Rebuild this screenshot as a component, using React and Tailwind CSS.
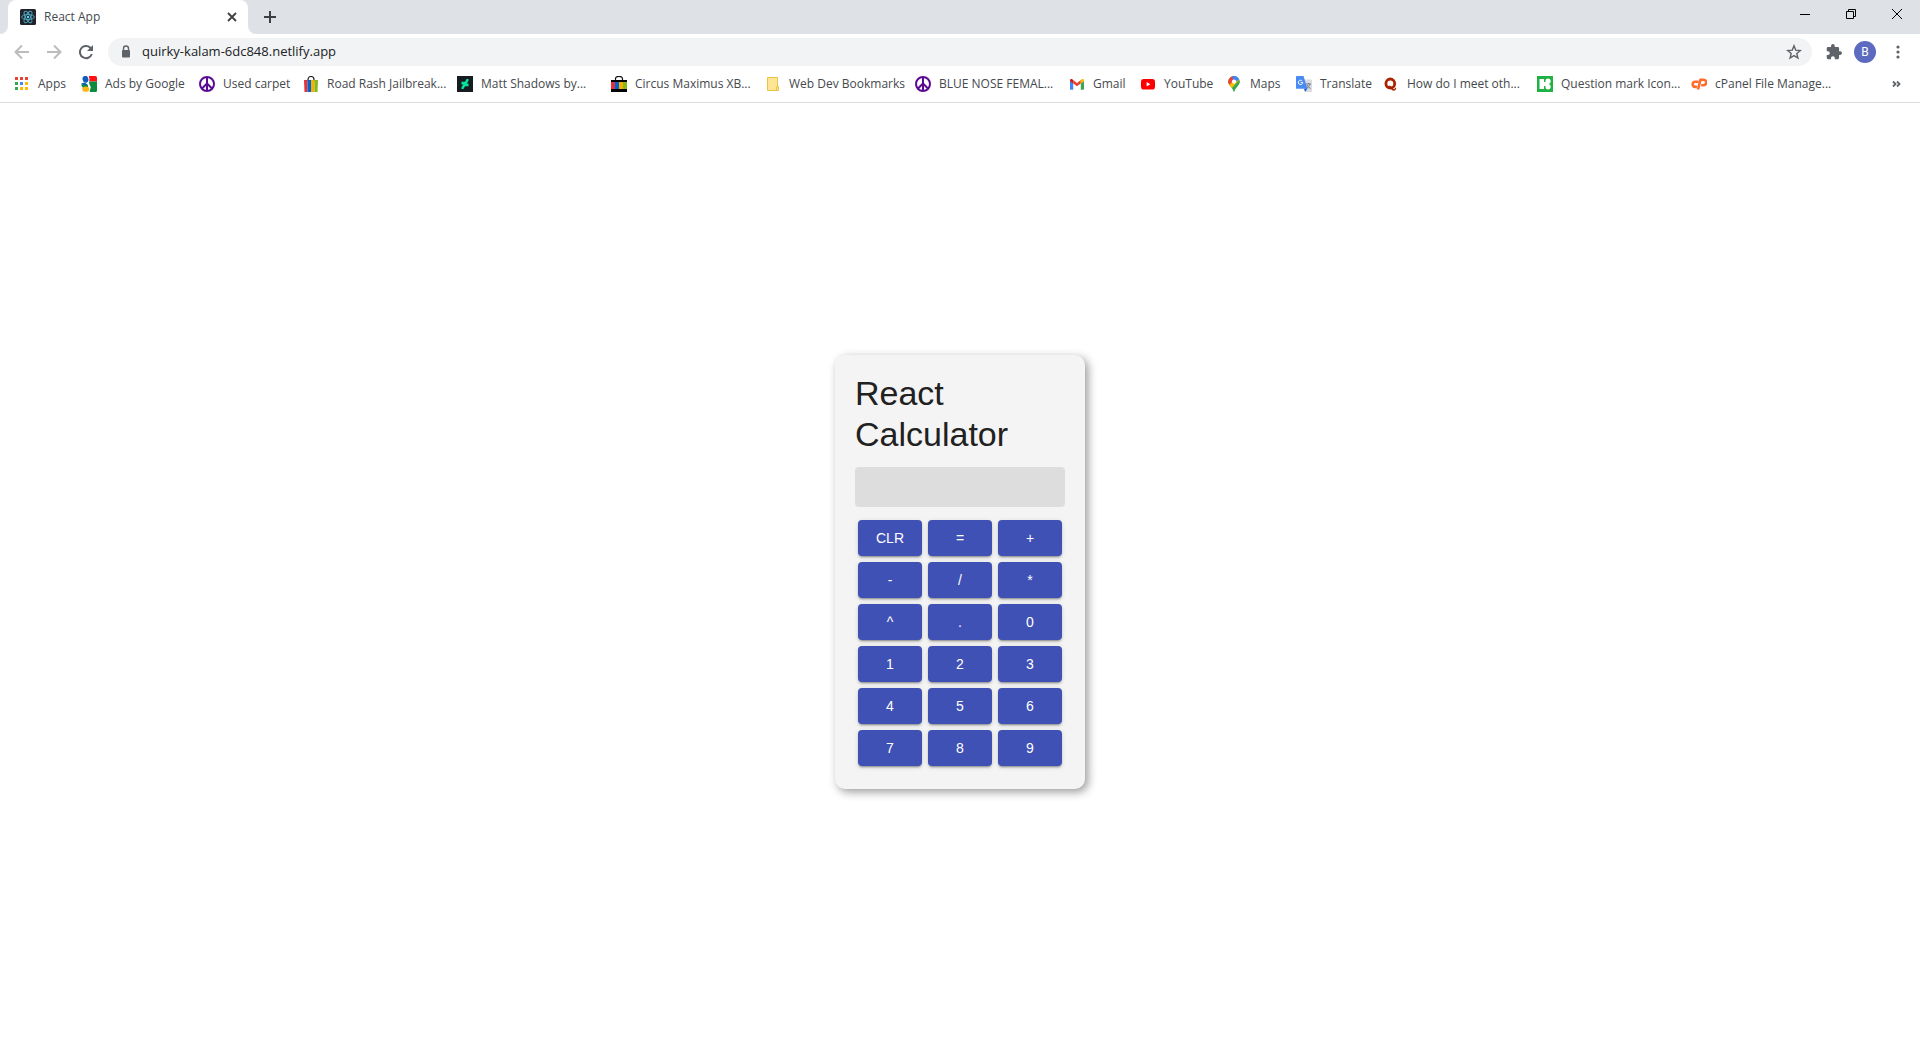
import React, { useState } from "react";

function ReactLogo() {
  return (
    <svg viewBox="0 0 16 16" className="size-4 shrink-0" aria-hidden="true">
      <rect width="16" height="16" rx="1.5" fill="#20232a" />
      <g fill="none" stroke="#4fa8c0" strokeWidth="0.9">
        <ellipse cx="8" cy="8" rx="6.4" ry="2.5" />
        <ellipse cx="8" cy="8" rx="6.4" ry="2.5" transform="rotate(60 8 8)" />
        <ellipse cx="8" cy="8" rx="6.4" ry="2.5" transform="rotate(120 8 8)" />
      </g>
      <circle cx="8" cy="8" r="1.2" fill="#61dafb" />
    </svg>
  );
}

function Icon({ children, className = "size-4 shrink-0" }) {
  return (
    <svg viewBox="0 0 16 16" className={className} fill="none" aria-hidden="true">
      {children}
    </svg>
  );
}

const dots = [
  ["#ea4335", "#ea4335", "#ea4335"],
  ["#34a853", "#4285f4", "#fbbc04"],
  ["#34a853", "#fbbc04", "#fbbc04"],
];

const AppsIcon = () => (
  <Icon>
    {dots.map((row, y) =>
      row.map((color, x) => (
        <rect key={`${x}${y}`} x={1 + x * 5} y={1 + y * 5} width="3" height="3" fill={color} />
      ))
    )}
  </Icon>
);

const GoogleIcon = () => (
  <Icon>
    <path d="M8 0h6.5A1.5 1.5 0 0 1 16 1.500V5.500H8z" fill="#ff1212" />
    <path d="M8 5.500H16V14.500A1.500 1.500 0 0 1 14.500 16H8.500z" fill="#0d8a3e" />
    <path d="M0 8.500 4 7.500l5 3L8 12H2z" fill="#0d8a3e" />
    <path d="M7 0 8.500 2.500 8 7.500 9.800 11 8.500 16H7z" fill="#fff" />
    <ellipse cx="4.500" cy="3.300" rx="2.900" ry="3.500" transform="rotate(-14 4.500 3.300)" fill="#0a5ec2" />
    <path d="M0 7.500 3.500 6.500 6.500 8.500 6 9.500 2.500 8.500z" fill="#0a5ec2" />
    <ellipse cx="4.800" cy="13.200" rx="3.500" ry="2.600" fill="#fbb516" />
  </Icon>
);

const PeaceIcon = () => (
  <Icon>
    <circle cx="8" cy="8" r="7" stroke="#5b0a91" strokeWidth="2" fill="#fff" />
    <path d="M8 1v14M8 7.500 3 12.500M8 7.500l5 5" stroke="#5b0a91" strokeWidth="2" />
  </Icon>
);

const BagIcon = () => (
  <Icon>
    <path d="M5 5V3.500a3 3 0 0 1 6 0V5" stroke="#222" strokeWidth="1.200" />
    <path d="M1 4h3.500v12H1.500z" fill="#e53238" />
    <path d="M4.500 4H8v12H4.500z" fill="#0064d2" />
    <path d="M8 4h3.500v12H8z" fill="#f5af02" />
    <path d="M11.500 4H15l-.5 12h-3z" fill="#86b817" />
  </Icon>
);

const DeviantIcon = () => (
  <Icon>
    <rect width="16" height="16" fill="#161c20" />
    <path
      d="M11.500 3v2L9.700 7.500h1.800v2.800H8.200l-.7.700L6.500 13H4.500v-2l1.800-2.500H4.500V5.700h3.300l.7-.7 1-2z"
      fill="#05e59b"
    />
  </Icon>
);

const StripedBagIcon = () => (
  <Icon>
    <path d="M4.500 5V3a3.500 2.500 0 0 1 7 0v2" stroke="#111" strokeWidth="1.200" />
    <path d="M0 4h16v12H0z" fill="#000" />
    <path d="M0 6h4v7H0z" fill="#e53238" />
    <path d="M4 6h4v7H4z" fill="#0064d2" />
    <path d="M8 6h4v7H8z" fill="#f5af02" />
    <path d="M12 6h4v7h-4z" fill="#86b817" />
  </Icon>
);

const FolderIcon = () => (
  <Icon>
    <path d="M2.500 1.500h10v13h-10z" fill="#ffe694" stroke="#e8c348" />
    <path d="M11.500 14.500v-3.500l2-.5v4z" fill="#ffe694" stroke="#e8c348" />
  </Icon>
);

const GmailIcon = () => (
  <Icon>
    <path d="M1 4.500v8.400c0 .4.300.8.800.8h2.400V7z" fill="#4285f4" />
    <path d="M15 4.500v8.400c0 .4-.3.8-.8.800h-2.400V7z" fill="#34a853" />
    <path d="M4.200 4 8 6.900 11.800 4v3.400L8 10.300 4.200 7.400z" fill="#ea4335" />
    <path d="M1 4.500C1 3 2.500 2.700 3.500 3.400l.7.600v3.400L1 5.200z" fill="#c5221f" />
    <path d="M15 4.500c0-1.500-1.500-1.800-2.500-1.100l-.7.600v3.400L15 5.200z" fill="#fbbc04" />
  </Icon>
);

const YouTubeIcon = () => (
  <Icon>
    <rect x="1" y="3" width="14" height="10.500" rx="2.800" fill="#f00" />
    <path d="M6.600 6v4.500l3.800-2.200z" fill="#fff" />
  </Icon>
);

const MapsIcon = () => (
  <Icon>
    <clipPath id="pin">
      <path d="M8 0a5.600 5.600 0 0 0-5.600 5.700C2.400 9.500 6.500 11 8 16c1.500-5 5.600-6.500 5.600-10.300A5.600 5.600 0 0 0 8 0z" />
    </clipPath>
    <g clipPath="url(#pin)">
      <path d="M0 0h16v16H0z" fill="#34a853" />
      <path d="M0 0h8v6L1 12z" fill="#ea4335" />
      <path d="M6 0h8l2 1-8 5z" fill="#4285f4" />
      <path d="M12 1 15 5 7 14 2 9z" fill="#fbbc04" />
      <path d="M13 4 15 5v12H6V12z" fill="#34a853" />
      <path d="M7 0h7v3L8 7z" fill="#4285f4" />
      <path d="M2 2 4 1l3.500 4L3 9 2 8z" fill="#ea4335" />
    </g>
    <circle cx="8" cy="5.600" r="2.100" fill="#fff" />
  </Icon>
);

const TranslateIcon = () => (
  <Icon>
    <path d="M7 3.500h8.200c.5 0 .8.300.8.800v10.900c0 .5-.3.800-.8.800H10z" fill="#dadce0" />
    <path d="M10 8h5M12.500 7v1M14 8c-.5 2-2 3.500-3.500 4.500M11 9c.7 1.500 2 2.700 3.500 3.500" stroke="#747b82" strokeWidth="1" />
    <path d="M8 12.500h3.500L9 16z" fill="#1a55c4" />
    <path d="M.9 0h6.600l4 12.800H.9c-.5 0-.9-.4-.9-.9V.9C0 .4.400 0 .9 0z" fill="#4a8af4" />
    <path d="M6.200 5a2.200 2.200 0 1 0 .5 1.600H4.600" stroke="#fff" strokeWidth="1" />
  </Icon>
);

const QuoraIcon = () => (
  <Icon>
    <ellipse cx="7.300" cy="7.600" rx="4.400" ry="4.600" stroke="#a82400" strokeWidth="2.800" />
    <path d="M5 10c2.300-1 3.700.3 4.500 2 .7 1.500 2.400 1.600 2.600-.2h1.100c0 3.500-4 3.700-5 1.200C7.500 11.500 6.600 10.700 5 11z" fill="#a82400" />
  </Icon>
);

const Icons8Icon = () => (
  <Icon>
    <rect width="16" height="16" fill="#1fb141" />
    <path d="M2.500 3H7v10H2.500z" fill="#fff" />
    <path d="M6.500 6h5v4h-5z" fill="#fff" />
    <circle cx="11" cy="5.200" r="2.700" fill="#fff" />
    <circle cx="11" cy="10.800" r="2.700" fill="#fff" />
    <path d="M7 3h1.200v3H7zM7 10h1.200v3H7z" fill="#1fb141" />
  </Icon>
);

const CPanelIcon = () => (
  <Icon>
    <path d="M7.600 5.700H4.300a2.600 2.600 0 0 0 0 5.200h1.600" stroke="#ff6c2c" strokeWidth="2.600" />
    <path d="M7 13.500 9.500 3.800h3a2.700 2.700 0 0 1 0 5.400h-2.300" stroke="#ff6c2c" strokeWidth="2.600" />
  </Icon>
);

const bookmarks = [
  { label: "Apps", icon: AppsIcon, width: "w-[67px]" },
  { label: "Ads by Google", icon: GoogleIcon, width: "w-[118px]" },
  { label: "Used carpet", icon: PeaceIcon, width: "w-[104px]" },
  { label: "Road Rash Jailbreak...", icon: BagIcon, width: "w-[154px]" },
  { label: "Matt Shadows by...", icon: DeviantIcon, width: "w-[154px]" },
  { label: "Circus Maximus XB...", icon: StripedBagIcon, width: "w-[154px]" },
  { label: "Web Dev Bookmarks", icon: FolderIcon, width: "w-[150px]" },
  { label: "BLUE NOSE FEMAL...", icon: PeaceIcon, width: "w-[154px]" },
  { label: "Gmail", icon: GmailIcon, width: "w-[71px]" },
  { label: "YouTube", icon: YouTubeIcon, width: "w-[86px]" },
  { label: "Maps", icon: MapsIcon, width: "w-[70px]" },
  { label: "Translate", icon: TranslateIcon, width: "w-[87px]" },
  { label: "How do I meet oth...", icon: QuoraIcon, width: "w-[154px]" },
  { label: "Question mark Icon...", icon: Icons8Icon, width: "w-[154px]" },
  { label: "cPanel File Manage...", icon: CPanelIcon, width: "w-[154px]" },
];

function TabStrip() {
  return (
    <div className="flex h-[34px] items-stretch bg-[#dee1e6]">
      <div className="flex w-2 bg-white">
        <span className="w-full rounded-br-lg bg-[#dee1e6]" />
      </div>
      <div className="flex w-60 items-center gap-2 rounded-t-lg bg-white pl-3 pr-2">
        <ReactLogo />
        <span className="flex-1 text-xs text-[#45494d]">React App</span>
        <button type="button" aria-label="Close tab" className="flex size-4 items-center justify-center text-[#3c4043]">
          <svg viewBox="0 0 16 16" className="size-4" stroke="currentColor" strokeWidth="1.8" aria-hidden="true">
            <path d="m4 4 8 8M12 4l-8 8" />
          </svg>
        </button>
      </div>
      <div className="flex w-2 bg-white">
        <span className="w-full rounded-bl-lg bg-[#dee1e6]" />
      </div>
      <button type="button" aria-label="New tab" className="flex w-7 items-center justify-center text-[#3c4043]">
        <svg viewBox="0 0 16 16" className="size-4" stroke="currentColor" strokeWidth="2" aria-hidden="true">
          <path d="M2 8h12M8 2v12" />
        </svg>
      </button>
      <div className="ml-auto flex h-7 text-black">
        <button type="button" aria-label="Minimize" className="flex w-[46px] items-center justify-center">
          <svg viewBox="0 0 10 10" className="size-2.5" stroke="currentColor" aria-hidden="true">
            <path d="M0 5.500h10" />
          </svg>
        </button>
        <button type="button" aria-label="Restore" className="flex w-[46px] items-center justify-center">
          <svg viewBox="0 0 10 10" className="size-2.5" fill="none" stroke="currentColor" aria-hidden="true">
            <path d="M.5 2.500h7v7h-7zM2.500 2.500v-2h7v7h-2" />
          </svg>
        </button>
        <button type="button" aria-label="Close window" className="flex w-[46px] items-center justify-center">
          <svg viewBox="0 0 10 10" className="size-2.5" stroke="currentColor" aria-hidden="true">
            <path d="m0 0 10 10M10 0 0 10" />
          </svg>
        </button>
      </div>
    </div>
  );
}

function Toolbar() {
  const [url, setUrl] = useState("quirky-kalam-6dc848.netlify.app");
  return (
    <div className="flex h-9 items-center px-3.5 text-[#5f6368]">
      <div className="flex gap-4">
        <button type="button" aria-label="Back" className="text-[#babcbe]">
          <svg viewBox="0 0 16 16" className="size-4" fill="none" stroke="currentColor" strokeWidth="2" aria-hidden="true">
            <path d="M15 8H2M8 1.500 1.500 8 8 14.500" />
          </svg>
        </button>
        <button type="button" aria-label="Forward" className="text-[#babcbe]">
          <svg viewBox="0 0 16 16" className="size-4" fill="none" stroke="currentColor" strokeWidth="2" aria-hidden="true">
            <path d="M1 8h13M8 1.500 14.500 8 8 14.500" />
          </svg>
        </button>
        <button type="button" aria-label="Reload">
          <svg viewBox="0 0 16 16" className="size-4" fill="none" aria-hidden="true">
            <path d="M13.800 10a6.100 6.100 0 1 1-1.500-6.300L14 5.500" stroke="currentColor" strokeWidth="2" />
            <path d="M15 1v6H9z" fill="currentColor" />
          </svg>
        </button>
      </div>
      <div className="ml-3.5 flex h-7 flex-1 items-center rounded-full bg-[#f1f3f4] pl-3 pr-2.5">
        <svg viewBox="0 0 12 16" className="h-4 w-3" fill="none" aria-hidden="true">
          <path d="M3.500 7V4.500a2.500 2.500 0 0 1 5 0V7" stroke="currentColor" strokeWidth="1.400" />
          <rect x="2" y="6" width="8" height="7.500" rx="1" fill="currentColor" />
        </svg>
        <input
          aria-label="Address"
          value={url}
          onChange={(e) => setUrl(e.target.value)}
          className="ml-2.5 flex-1 bg-transparent text-[13px] text-[#202124] outline-none"
        />
        <button type="button" aria-label="Bookmark this page">
          <svg viewBox="0 0 16 16" className="size-4" fill="none" stroke="currentColor" strokeWidth="1.400" aria-hidden="true">
            <path d="m8 1.800 1.700 4.300 4.600.4-3.500 3 1.100 4.500L8 11.600 4.100 14l1.100-4.500-3.500-3 4.600-.4z" />
          </svg>
        </button>
      </div>
      <button type="button" aria-label="Extensions" className="ml-3.5">
        <svg viewBox="1 1 22 22" className="size-4" fill="currentColor" aria-hidden="true">
          <path d="M20.500 11H19V7a2 2 0 0 0-2-2h-4V3.500a2.500 2.500 0 0 0-5 0V5H4a2 2 0 0 0-2 2v3.800h1.500a2.700 2.700 0 0 1 0 5.400H2V20a2 2 0 0 0 2 2h3.800v-1.500a2.700 2.700 0 0 1 5.400 0V22H17a2 2 0 0 0 2-2v-4h1.500a2.500 2.500 0 0 0 0-5z" />
        </svg>
      </button>
      <button
        type="button"
        aria-label="Profile"
        className="ml-3 flex size-[22px] items-center justify-center rounded-full bg-[#5c6bc0] font-['Roboto',sans-serif] text-xs text-white"
      >
        B
      </button>
      <button type="button" aria-label="Menu" className="ml-3.5">
        <svg viewBox="0 0 16 16" className="size-4" fill="currentColor" aria-hidden="true">
          <circle cx="8" cy="3" r="1.600" />
          <circle cx="8" cy="8" r="1.600" />
          <circle cx="8" cy="13" r="1.600" />
        </svg>
      </button>
    </div>
  );
}

function BookmarksBar() {
  return (
    <nav aria-label="Bookmarks" className="flex h-[33px] items-start border-b border-[#dadce0] px-3.5">
      <div className="flex flex-1 overflow-hidden pt-1.5">
        {bookmarks.map(({ label, icon: BookmarkIcon, width }) => (
          <a key={label} href="#" className={`flex shrink-0 items-center gap-2 whitespace-nowrap text-xs text-[#45494d] ${width}`}>
            <BookmarkIcon />
            {label}
          </a>
        ))}
      </div>
      <button type="button" aria-label="More bookmarks" className="mt-1.5 text-[#5f6368]">
        <svg viewBox="0 0 16 16" className="size-4" fill="none" stroke="currentColor" strokeWidth="1.800" aria-hidden="true">
          <path d="m3 5.500 2.500 2.500L3 10.500M7 5.500 9.500 8 7 10.500" />
        </svg>
      </button>
    </nav>
  );
}

const keys = ["CLR", "=", "+", "-", "/", "*", "^", ".", "0", "1", "2", "3", "4", "5", "6", "7", "8", "9"];

const precedence = { "+": 1, "-": 1, "*": 2, "/": 2, "^": 3 };

const operations = {
  "+": (a, b) => a + b,
  "-": (a, b) => a - b,
  "*": (a, b) => a * b,
  "/": (a, b) => a / b,
  "^": (a, b) => a ** b,
};

function evaluate(expression) {
  const tokens = expression.match(/\d*\.?\d+|[-+*/^]/g) || [];
  const values = [];
  const operators = [];
  const reduce = () => {
    const b = values.pop();
    const a = values.pop();
    values.push(operations[operators.pop()](a, b));
  };
  tokens.forEach((token) => {
    if (!precedence[token]) {
      values.push(Number(token));
      return;
    }
    while (operators.length && precedence[operators[operators.length - 1]] >= precedence[token]) reduce();
    operators.push(token);
  });
  while (operators.length) reduce();
  const result = values[0];
  return Number.isFinite(result) ? String(result) : "";
}

function Calculator() {
  const [expression, setExpression] = useState("");

  const press = (key) => {
    if (key === "CLR") setExpression("");
    else if (key === "=") setExpression(evaluate(expression));
    else setExpression(expression + key);
  };

  return (
    <section className="w-[250px] rounded-[10px] bg-[#f4f4f4] px-5 pb-5 pt-[18px] font-['Liberation_Sans',Arial,sans-serif] shadow-[3px_3px_10px_rgba(0,0,0,0.4)]">
      <h1 className="text-[34px] leading-[41px] text-[#212121]">React Calculator</h1>
      <input
        readOnly
        aria-label="Result"
        value={expression}
        className="mt-3 block h-10 w-full rounded bg-[#dddddd] px-2 text-right text-xl text-[#212121] outline-none"
      />
      <div className="mt-2.5 grid grid-cols-3 gap-1.5 p-[3px]">
        {keys.map((key) => (
          <button
            key={key}
            type="button"
            onClick={() => press(key)}
            className="h-9 rounded bg-[#3f51b5] text-sm text-white shadow-[0_3px_1px_-2px_rgba(0,0,0,0.2),0_2px_2px_0_rgba(0,0,0,0.14),0_1px_5px_0_rgba(0,0,0,0.12)]"
          >
            {key}
          </button>
        ))}
      </div>
    </section>
  );
}

export default function App() {
  return (
    <div className="flex min-h-screen flex-col bg-white font-['Open_Sans','Noto_Sans',sans-serif]">
      <header>
        <TabStrip />
        <Toolbar />
        <BookmarksBar />
      </header>
      <main className="flex flex-1 items-center justify-center">
        <Calculator />
      </main>
    </div>
  );
}
